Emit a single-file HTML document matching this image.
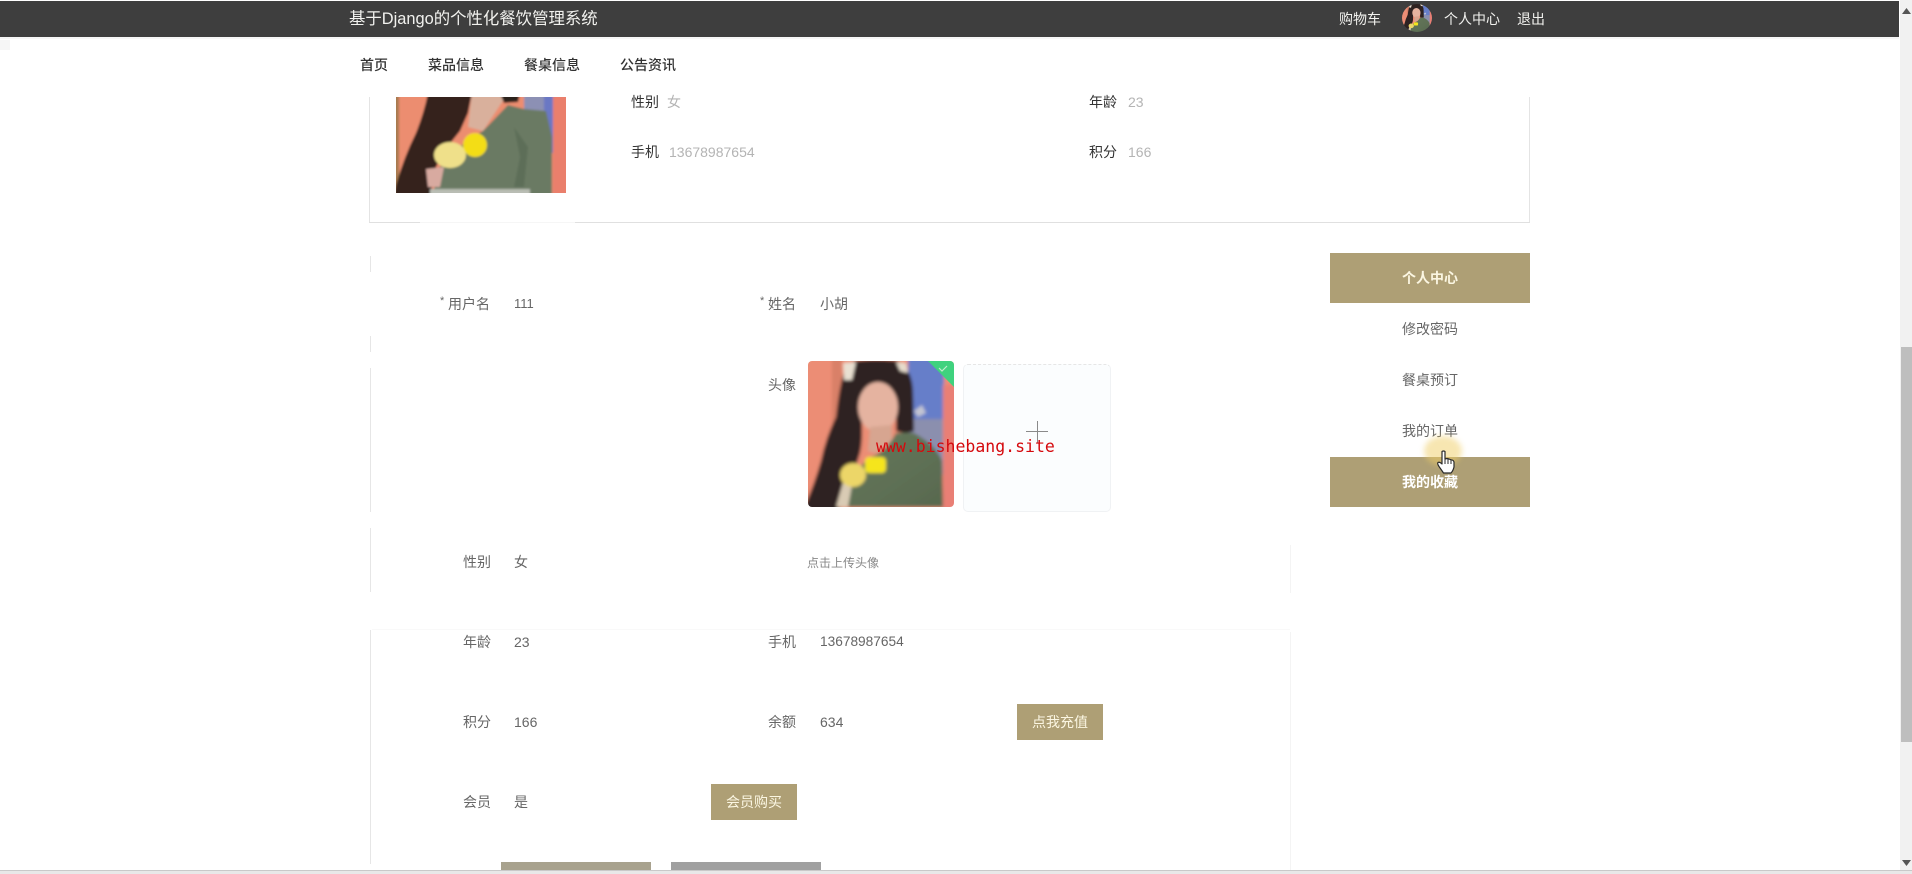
<!DOCTYPE html>
<html lang="zh">
<head>
<meta charset="utf-8">
<title>基于Django的个性化餐饮管理系统</title>
<style>
html,body{margin:0;padding:0;width:1912px;height:874px;overflow:hidden;background:#fff}
body{position:relative;font-family:"Liberation Sans","Noto Sans CJK SC",sans-serif;font-size:14px;color:#666}
.a{position:absolute;display:block}
.t{position:absolute;line-height:20px;height:20px;white-space:nowrap;filter:blur(.3px)}
.d{color:#333}
.l{color:#b4b4b4}
.w{color:#f1f1ee}
.c{color:#fbf6e2;text-align:center}
.gold{position:absolute;background:#ae9f75}
.line{position:absolute;background:#e6e6e6;width:1px}
</style>
</head>
<body>
<svg width="0" height="0" style="position:absolute">
<defs>
<filter id="b" x="-5%" y="-5%" width="110%" height="110%"><feGaussianBlur stdDeviation="1.5"/></filter>
<filter id="b2" x="-5%" y="-5%" width="110%" height="110%"><feGaussianBlur stdDeviation="1"/></filter>
<linearGradient id="sw" x1="0" y1="0" x2="1" y2="1"><stop offset="0" stop-color="#66795c"/><stop offset="1" stop-color="#58694f"/></linearGradient>
<symbol id="photo" viewBox="0 0 146 146" preserveAspectRatio="none">
<g filter="url(#b)">
<rect x="-4" y="-4" width="154" height="154" fill="#ec8d74"/>
<rect x="24" y="-4" width="10" height="154" fill="#d98068"/>
<rect x="100" y="-4" width="36" height="66" fill="#667ec9"/>
<rect x="100" y="58" width="36" height="56" fill="#8b8fae"/>
<rect x="135" y="24" width="15" height="126" fill="#e97f74"/>
<path d="M46 0 Q70 -3 90 0 Q104 8 105 30 L106 70 Q98 74 88 70 L88 40 L52 40 Q56 75 52 92 Q44 118 30 150 L-4 150 L-2 142 Q6 124 13 100 Q18 76 28 56 Q32 20 38 6 Z" fill="#2f2220"/>
<path d="M35 2 L48 1 L44 19 L36 19 Z" fill="#e9e0d2"/>
<path d="M88 1 L98 2 L100 12 L92 10 Z" fill="#e6dccc"/>
<ellipse cx="70" cy="46" rx="20" ry="25" fill="#e5b3a0"/>
<path d="M50 22 Q70 6 92 22 L90 12 Q70 -2 50 12 Z" fill="#2f2220"/>
<path d="M62 66 L84 64 L84 80 L68 92 L60 90 Z" fill="#d7a590"/>
<path d="M30 146 Q38 118 62 96 Q78 92 88 72 L106 72 Q128 84 134 100 L135 146 Z" fill="url(#sw)"/>
<path d="M28 146 L36 118 L44 124 L40 146 Z" fill="#d9cbb4"/>
<path d="M106 50 L114 44 L118 52 L110 56 Z" fill="#c2c4d2"/>
<ellipse cx="45" cy="114" rx="13" ry="12" fill="#ecd668"/>
<rect x="57" y="96" width="21" height="16" rx="4" fill="#f5e51a"/>
</g>
</symbol>
<symbol id="crop" viewBox="0 0 170 96" preserveAspectRatio="none">
<g filter="url(#b2)">
<rect x="-4" y="-4" width="178" height="104" fill="#ec8d70"/>
<rect x="-4" y="-4" width="7" height="104" fill="#a87a50"/>
<rect x="128" y="-4" width="30" height="30" fill="#8c90b4"/>
<rect x="148" y="-4" width="10" height="60" fill="#6a78c4"/>
<rect x="157" y="-4" width="17" height="104" fill="#ea7f6c"/>
<path d="M32 -4 L76 -4 L72 16 L64 34 L48 54 L40 70 L34 100 L-2 100 L0 88 Q8 60 20 36 Q28 16 32 -4 Z" fill="#35221f"/>
<path d="M76 -4 L112 -4 L87 34 L72 30 Z" fill="#d9b09c"/>
<path d="M104 -4 L124 -4 L122 5 L108 6 Z" fill="#2c201e"/>
<path d="M36 100 L44 70 L70 44 L87 34 L112 8 L128 12 L150 14 L156 40 L156 100 Z" fill="#6a7a63"/>
<path d="M118 30 L124 60 L118 90 L128 90 L132 50 Z" fill="#5d6e58"/>
<path d="M30 72 L48 70 L44 90 L32 90 Z" fill="#d8aaa0"/>
<rect x="34" y="92" width="100" height="6" fill="#b9bdb4"/>
<ellipse cx="54" cy="58" rx="16" ry="13" fill="#efe08a"/>
<ellipse cx="79" cy="48" rx="12" ry="12" fill="#f3dd16"/>
</g>
</symbol>
</defs>
</svg>

<!-- header -->
<div class="a" style="left:0;top:1px;width:1899px;height:36px;background:#3e3e3e"></div>
<div class="a" style="left:0;top:37px;width:1899px;height:2px;background:#f6f6f6"></div>
<div class="a" style="left:0;top:40px;width:10px;height:10px;background:#f6f6f6"></div>
<div class="t w" style="left:349px;top:9px;font-size:16.4px">基于Django的个性化餐饮管理系统</div>
<div class="t w" style="left:1339px;top:9px">购物车</div>
<svg class="a" style="left:1402px;top:4px;border-radius:50%;overflow:hidden" width="30" height="28"><use href="#photo" width="30" height="28"/></svg>
<div class="t w" style="left:1444px;top:9px">个人中心</div>
<div class="t w" style="left:1517px;top:9px">退出</div>

<!-- nav -->
<div class="t d" style="left:360px;top:55px;font-weight:500">首页</div>
<div class="t d" style="left:428px;top:55px;font-weight:500">菜品信息</div>
<div class="t d" style="left:524px;top:55px;font-weight:500">餐桌信息</div>
<div class="t d" style="left:620px;top:55px;font-weight:500">公告资讯</div>

<!-- top info card -->
<div class="a" style="left:369px;top:97px;width:1px;height:125px;background:#e4e4e4"></div>
<div class="a" style="left:1529px;top:97px;width:1px;height:126px;background:#e4e4e4"></div>
<div class="a" style="left:369px;top:222px;width:1161px;height:1px;background:#e0e0e0"></div>
<div class="a" style="left:420px;top:222px;width:155px;height:1px;background:#f6f6f6"></div>
<svg class="a" style="left:396px;top:97px" width="170" height="96"><use href="#crop" width="170" height="96"/></svg>
<div class="t d" style="left:631px;top:92px">性别</div>
<div class="t l" style="left:667px;top:92px">女</div>
<div class="t d" style="left:631px;top:142px">手机</div>
<div class="t l" style="left:669px;top:142px">13678987654</div>
<div class="t d" style="left:1089px;top:92px">年龄</div>
<div class="t l" style="left:1128px;top:92px">23</div>
<div class="t d" style="left:1089px;top:142px">积分</div>
<div class="t l" style="left:1128px;top:142px">166</div>

<!-- form fragments -->
<div class="line" style="left:370px;top:256px;height:16px"></div>
<div class="line" style="left:370px;top:336px;height:16px"></div>
<div class="line" style="left:370px;top:368px;height:144px"></div>
<div class="line" style="left:370px;top:528px;height:64px"></div>
<div class="line" style="left:370px;top:630px;height:234px"></div>
<div class="line" style="left:1290px;top:545px;height:48px;background:#f4f4f4"></div>
<div class="line" style="left:1290px;top:632px;height:238px;background:#f4f4f4"></div>
<div class="a" style="left:372px;top:629px;width:918px;height:1px;background:#f9f9f9"></div>

<div class="t" style="left:440px;top:291px;font-size:11px">*</div>
<div class="t" style="left:448px;top:294px">用户名</div>
<div class="t" style="left:514px;top:294px;font-size:13px">111</div>
<div class="t" style="left:760px;top:291px;font-size:11px">*</div>
<div class="t" style="left:768px;top:294px">姓名</div>
<div class="t" style="left:820px;top:294px">小胡</div>
<div class="t" style="left:768px;top:375px">头像</div>

<!-- avatar upload -->
<div class="a" style="left:808px;top:361px;width:146px;height:146px;border-radius:4px;overflow:hidden">
<svg width="146" height="146" style="display:block"><use href="#photo" width="146" height="146"/><path d="M120 0 L146 0 L146 26 Z" fill="#3fd27e"/><path d="M131 7 l3 3 l5 -5" fill="none" stroke="#bfeccd" stroke-width="1.2"/></svg>
</div>
<div class="a" style="left:963px;top:364px;width:146px;height:146px;background:#fbfdfe;border:1px solid #f0f2f4;border-top:1px dashed #e6e6e6;border-radius:5px"></div>
<div class="a" style="left:1026px;top:431px;width:22px;height:1px;background:#8a8a8a"></div>
<div class="a" style="left:1037px;top:421px;width:1px;height:22px;background:#8a8a8a"></div>
<div class="t" style="left:876px;top:437px;font-family:'DejaVu Sans Mono','Liberation Mono',monospace;font-size:16.5px;color:#d5090d">www.bishebang.site</div>
<div class="t" style="left:807px;top:553px;font-size:12px;color:#888">点击上传头像</div>

<!-- rows -->
<div class="t" style="left:463px;top:552px">性别</div>
<div class="t" style="left:514px;top:552px">女</div>
<div class="t" style="left:463px;top:632px">年龄</div>
<div class="t" style="left:514px;top:632px">23</div>
<div class="t" style="left:768px;top:632px">手机</div>
<div class="t" style="left:820px;top:632px;font-size:13.7px">13678987654</div>
<div class="t" style="left:463px;top:712px">积分</div>
<div class="t" style="left:514px;top:712px">166</div>
<div class="t" style="left:768px;top:712px">余额</div>
<div class="t" style="left:820px;top:712px">634</div>
<div class="t" style="left:463px;top:792px">会员</div>
<div class="t" style="left:514px;top:792px">是</div>

<div class="gold" style="left:1017px;top:704px;width:86px;height:36px"></div>
<div class="t c" style="left:1017px;top:712px;width:86px">点我充值</div>
<div class="gold" style="left:711px;top:784px;width:86px;height:36px"></div>
<div class="t c" style="left:711px;top:792px;width:86px">会员购买</div>

<div class="a" style="left:501px;top:862px;width:150px;height:8px;background:#a8a28e"></div>
<div class="a" style="left:671px;top:862px;width:150px;height:8px;background:#a0a0a0"></div>

<!-- side menu -->
<div class="gold" style="left:1330px;top:253px;width:200px;height:50px"></div>
<div class="t c" style="left:1330px;top:268px;width:200px;font-weight:bold">个人中心</div>
<div class="t" style="left:1330px;top:319px;width:200px;text-align:center">修改密码</div>
<div class="t" style="left:1330px;top:370px;width:200px;text-align:center">餐桌预订</div>
<div class="t" style="left:1330px;top:421px;width:200px;text-align:center">我的订单</div>
<div class="gold" style="left:1330px;top:457px;width:200px;height:50px"></div>
<div class="t c" style="left:1330px;top:472px;width:200px;font-weight:bold;color:#fff">我的收藏</div>

<!-- cursor highlight -->
<div class="a" style="left:1424px;top:436px;width:38px;height:30px;border-radius:50%;background:rgba(240,205,100,.5);filter:blur(3px)"></div>
<svg class="a" style="left:1436px;top:450px" width="20" height="24" viewBox="0 0 20 24">
<path d="M6 1.5 Q7.5 .5 9 1.5 L9 9 L11 8.5 L13 9 L15 9.8 Q17.5 10 18 12 L18 17 Q17 21 15 23 L7.5 23 Q5.5 20 3 16.5 Q1 13.5 2 12.5 Q3.5 11.5 6 14 Z" fill="#fff" stroke="#2a2a2a" stroke-width="1.2" stroke-linejoin="round"/>
<path d="M9 9 L9 14 M12 9 L12 14 M15 10 L15 14" stroke="#2a2a2a" stroke-width="1" fill="none"/>
</svg>

<!-- scrollbar -->
<div class="a" style="left:1900px;top:0;width:12px;height:870px;background:#f1f1f1"></div>
<div class="a" style="left:1901px;top:347px;width:11px;height:395px;background:#bebebe"></div>
<svg class="a" style="left:1902px;top:8px" width="9" height="6"><path d="M0 6 L4.5 0 L9 6 Z" fill="#555"/></svg>
<svg class="a" style="left:1902px;top:860px" width="9" height="6"><path d="M0 0 L9 0 L4.5 6 Z" fill="#555"/></svg>

<!-- bottom strip -->
<div class="a" style="left:0;top:870px;width:1912px;height:4px;background:#e8e8e8;border-top:1px solid #c9c9c9;box-sizing:border-box"></div>
</body>
</html>
